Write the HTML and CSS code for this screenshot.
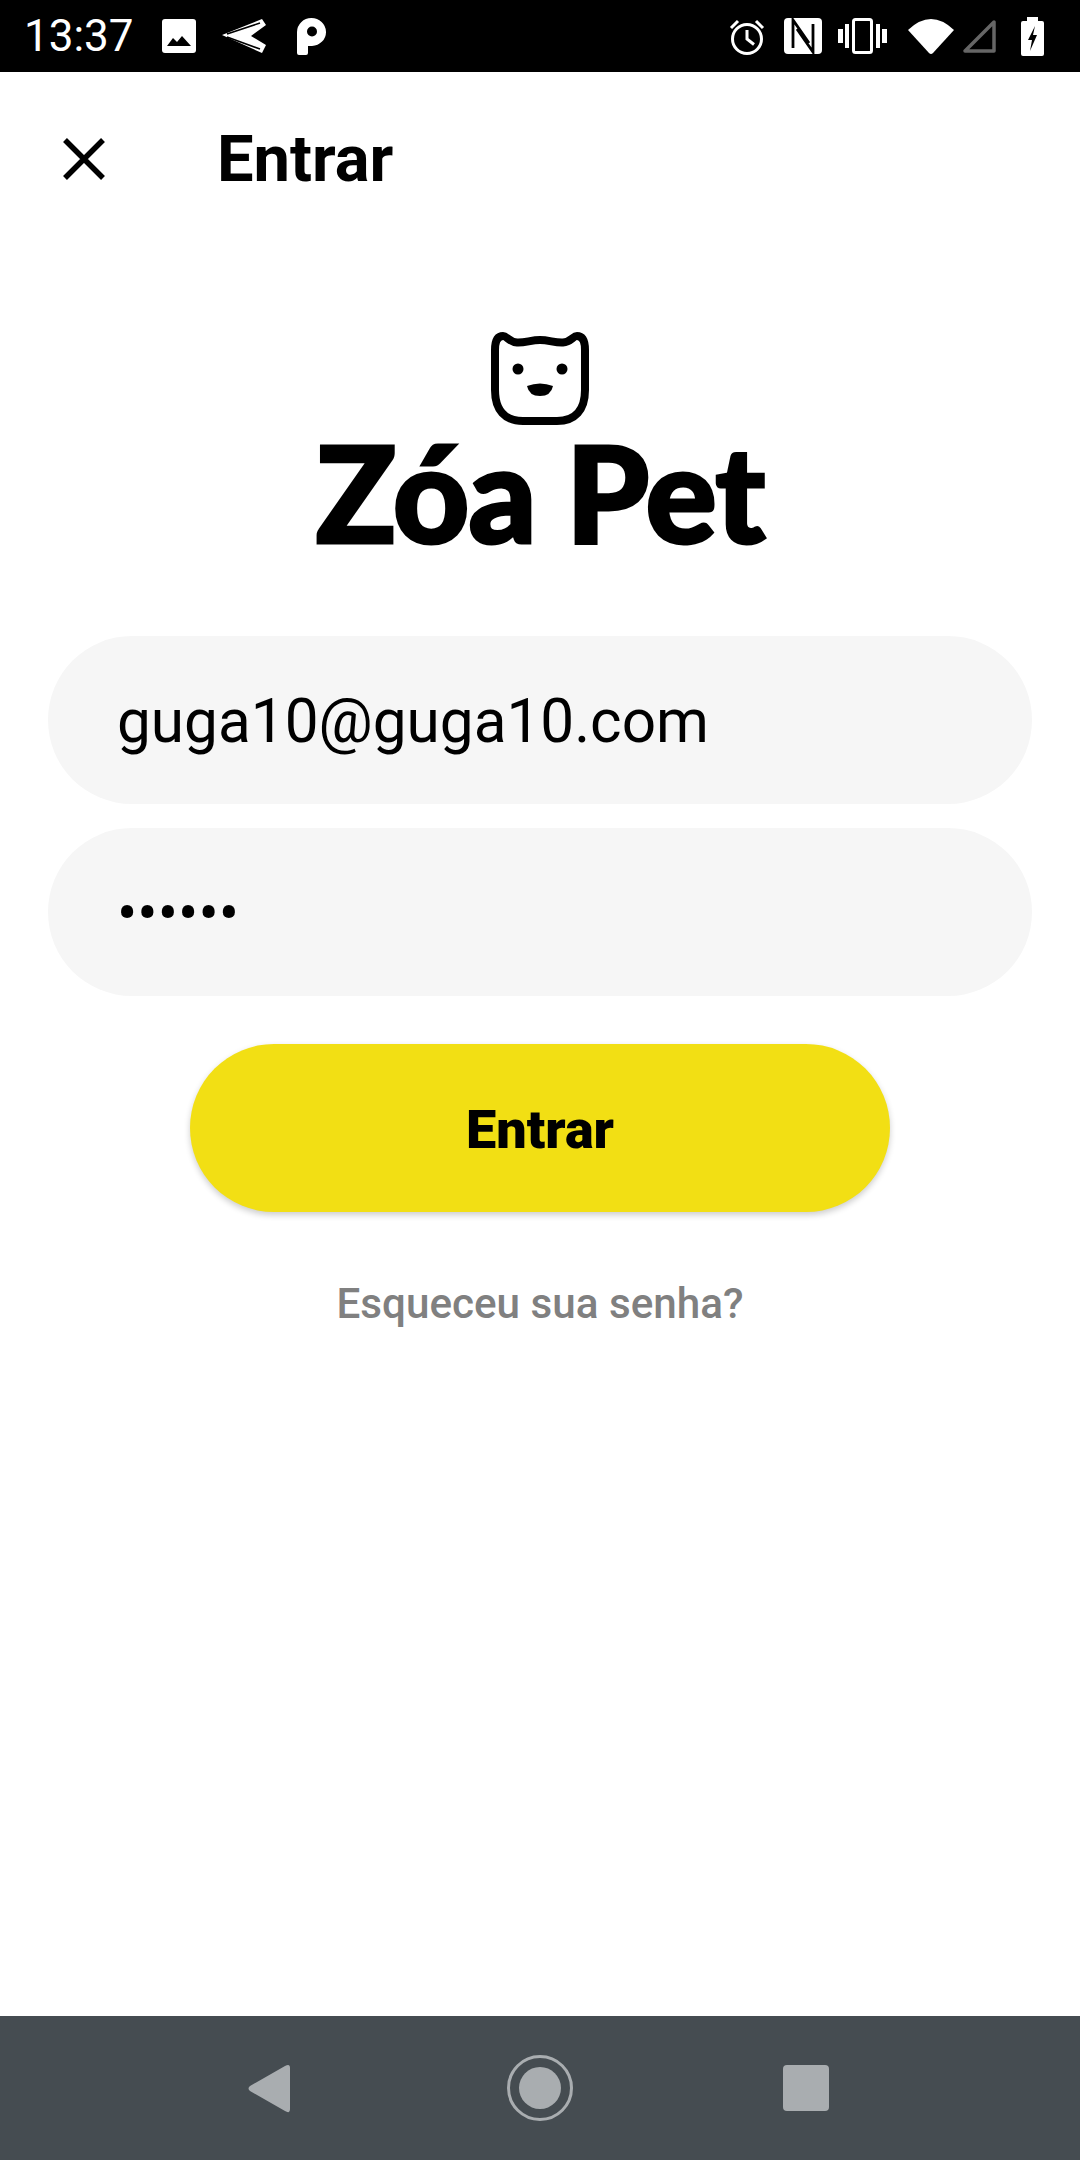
FILE: index.html
```html
<!DOCTYPE html>
<html lang="pt">
  <head>
    <meta charset="UTF-8" />
    <meta name="viewport" content="width=device-width, initial-scale=1.0" />
    <title>Entrar</title>
    <link rel="stylesheet" href="styles.css">
  </head>
  <body>
    <div class="status-bar">
      <span class="time">13:37</span>
      <svg class="ic-image" width="34" height="34" viewBox="0 0 34 34">
        <rect width="34" height="34" rx="3" fill="#fff" />
        <path d="M5 27 L11 19 L15 23 L20 17 L29 27Z" fill="#000" />
      </svg>
      <svg class="ic-plane" width="46" height="37" viewBox="0 0 46 37">
        <path d="M0 17 L40 1 L44 7 L29 18 L44 27 L40 35Z" fill="#fff" />
        <path d="M5 16 L38 5 M5 19 L38 31" stroke="#000" stroke-width="1.600" fill="none" />
      </svg>
      <svg class="ic-p" width="29" height="37" viewBox="0 0 29 37">
        <path d="M0 14 A14.5 14 0 1 1 15 28 H11 V35 Q11 37 9 37 H2 Q0 37 0 35 Z" fill="#fff" />
        <circle cx="15" cy="13.500" r="5" fill="#000" />
      </svg>
      <div class="status-right">
        <svg class="ic-alarm" width="36" height="37" viewBox="0 0 36 37">
          <circle cx="18" cy="21" r="14.500" fill="none" stroke="#fff" stroke-width="3" />
          <path d="M18 12 V21 L25 26.500 M2 10 L9 3 M34 10 L27 3" fill="none" stroke="#fff" stroke-width="3" />
        </svg>
        <svg class="ic-nfc" width="38" height="36" viewBox="0 0 38 36">
          <rect width="38" height="36" rx="4" fill="#fff" />
          <path d="M9 30 V2 L25 25 M29 6 V34 L13 11" fill="none" stroke="#000" stroke-width="2.800" />
        </svg>
        <svg class="ic-vibrate" width="49" height="36" viewBox="0 0 49 36">
          <rect x="15.500" y="1.500" width="18" height="33" rx="2" fill="none" stroke="#fff" stroke-width="3" />
          <path d="M0 11 H5 V25 H0Z M7 6 H11 V30 H7Z M38 6 H42 V30 H38Z M44 11 H49 V25 H44Z" fill="#fff" />
        </svg>
        <svg class="ic-wifi" width="46" height="37" viewBox="0 0 46 37">
          <path d="M0 12 Q23 -10 46 12 L25 35 Q23 37 21 35Z" fill="#fff" />
        </svg>
        <svg class="ic-signal" width="34" height="34" viewBox="0 0 34 34">
          <path d="M3 32 L32 3 V32 Z" fill="none" stroke="#666" stroke-width="3.500" stroke-linejoin="round" />
        </svg>
        <svg class="ic-battery" width="23" height="39" viewBox="0 0 23 39">
          <path d="M6 0 H17 V4 H21 Q23 4 23 6 V37 Q23 39 21 39 H2 Q0 39 0 37 V6 Q0 4 2 4 H6Z" fill="#fff" />
          <path d="M14 9 L7 23 H11 L9 34 L16 18 H12 Z" fill="#000" />
        </svg>
      </div>
    </div>

    <main class="screen">
      <header class="top-bar">
        <svg class="close" width="42" height="42" viewBox="0 0 42 42">
          <path d="M2 2 L40 40 M40 2 L2 40" stroke="#000" stroke-width="5.500" fill="none" />
        </svg>
        <h1>Entrar</h1>
      </header>

      <div class="logo">
        <svg width="98" height="94" viewBox="0 0 98 94">
          <path d="M4 18 C4 9 6 4 12 4 C16 4 18 10 26 10.500 C34 11 40 8 49 8 C58 8 64 11 72 10.500 C80 10 82 4 86 4 C92 4 94 9 94 18 L94 58 C94 78 84 89 66 89 L32 89 C14 89 4 78 4 58 Z" fill="none" stroke="#000" stroke-width="8" />
          <circle cx="27" cy="37" r="5.500" />
          <circle cx="71" cy="37" r="5.500" />
          <path d="M36 54 Q49 49 62 54 Q60 64 49 64 Q38 64 36 54Z" />
        </svg>
        <div class="wordmark">Zóa Pet</div>
      </div>

      <form class="login-form">
        <input class="field" type="email" value="guga10@guga10.com" />
        <input class="field" type="password" value="123456" />
        <button class="btn" type="button">Entrar</button>
      </form>
      <a class="forgot">Esqueceu sua senha?</a>
    </main>

    <nav class="nav-bar">
      <svg width="42" height="49" viewBox="0 0 42 49">
        <path d="M37 2 Q42 -1 42 4 V45 Q42 50 37 47 L2 27 Q-1 24.500 2 22Z" fill="#a9adb0" />
      </svg>
      <svg class="nav-home" width="66" height="66" viewBox="0 0 66 66">
        <circle cx="33" cy="33" r="31.500" fill="none" stroke="#a9adb0" stroke-width="3" />
        <circle cx="33" cy="33" r="21" fill="#a9adb0" />
      </svg>
      <div class="nav-square"></div>
    </nav>
  </body>
</html>
```

FILE: styles.css
```css
* {
  margin: 0;
  padding: 0;
  box-sizing: border-box;
}

body {
  font-family: Roboto, sans-serif;
  width: 1080px;
  height: 2160px;
  display: flex;
  flex-direction: column;
  background: white;
  overflow: hidden;
}

/* Status bar */
.status-bar {
  height: 72px;
  background: #000;
  color: white;
  display: flex;
  align-items: center;
  padding-left: 24px;
  padding-right: 36px;
}

.time {
  font-size: 44px;
  width: 138px;
}

.ic-plane {
  margin-left: 26px;
}

.ic-p {
  margin-left: 29px;
}

.status-right {
  margin-left: auto;
  display: flex;
  align-items: center;
}

.ic-nfc {
  margin-left: 19px;
}

.ic-vibrate {
  margin-left: 16px;
}

.ic-wifi {
  margin-left: 21px;
}

.ic-signal {
  margin-left: 8px;
}

.ic-battery {
  margin-left: 25px;
}

/* Page */
.screen {
  flex: 1;
  display: flex;
  flex-direction: column;
}

.top-bar {
  height: 174px;
  display: flex;
  align-items: center;
  padding-left: 63px;
}

.top-bar h1 {
  font-size: 65px;
  font-weight: 700;
  margin-left: 112px;
  color: #000;
}

.logo {
  margin-top: 86px;
  display: flex;
  flex-direction: column;
  align-items: center;
}

.wordmark {
  margin-top: 6px;
  font-family: Lato, sans-serif;
  font-weight: 900;
  font-size: 133px;
  line-height: 120px;
  letter-spacing: -1px;
  -webkit-text-stroke: 3px #000;
  color: #000;
  white-space: nowrap;
}

.login-form {
  margin-top: 84px;
  padding: 0 48px;
  display: flex;
  flex-direction: column;
  gap: 24px;
}

.field {
  height: 168px;
  border: none;
  outline: none;
  border-radius: 84px;
  background: #f6f6f6;
  padding: 2px 69px 0;
  font-family: Roboto, sans-serif;
  font-size: 60.3px;
  color: #000;
}

.btn {
  width: 700px;
  height: 168px;
  margin: 24px auto 0;
  padding-top: 2px;
  border: none;
  border-radius: 84px;
  background: #f2df14;
  box-shadow: 0 3px 6px rgba(0, 0, 0, 0.2);
  font-family: Roboto, sans-serif;
  font-size: 54px;
  font-weight: 900;
  color: #000;
}

.forgot {
  margin-top: 67px;
  text-align: center;
  font-size: 42.2px;
  font-weight: 500;
  color: #808080;
}

/* Android nav */
.nav-bar {
  height: 144px;
  background: #454c51;
  display: flex;
  align-items: center;
  padding-left: 248px;
}

.nav-home {
  margin-left: 217px;
}

.nav-square {
  width: 46px;
  height: 46px;
  margin-left: 210px;
  border-radius: 4px;
  background: #a9adb0;
}
```
